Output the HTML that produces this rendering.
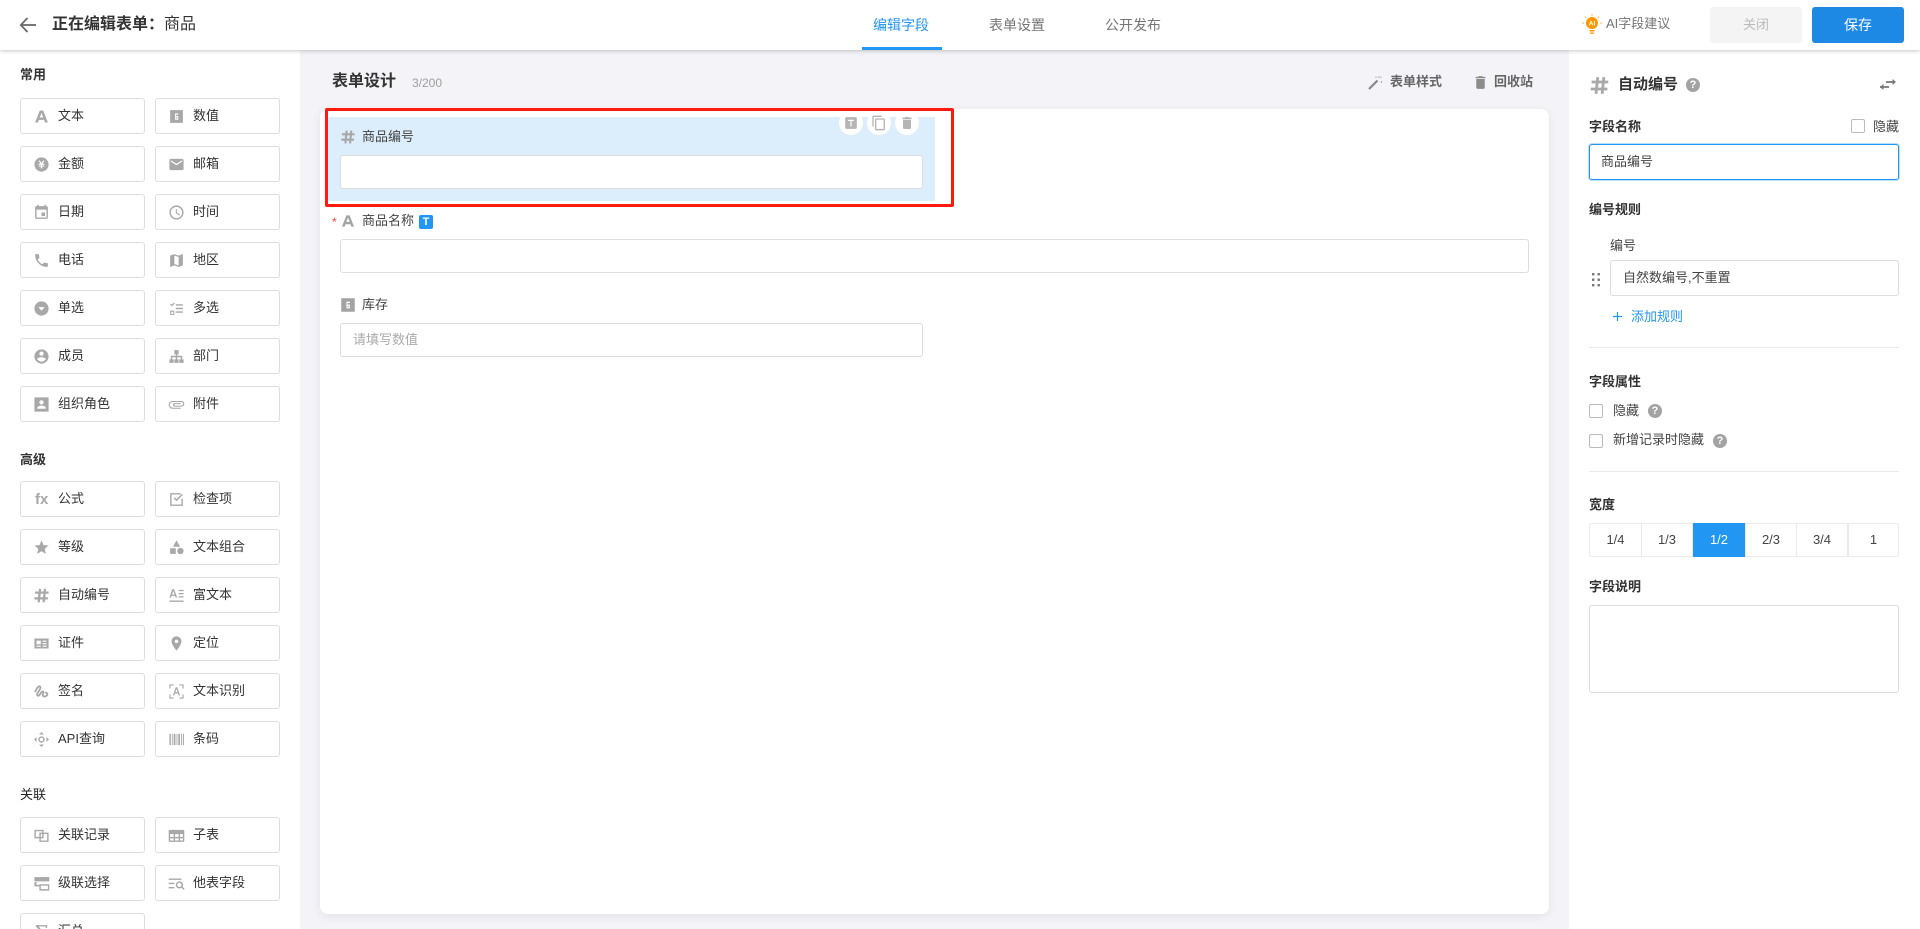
<!DOCTYPE html>
<html lang="zh"><head><meta charset="utf-8"><title>编辑表单</title>
<style>
*{box-sizing:border-box}
html,body{margin:0;padding:0;width:1920px;height:929px;overflow:hidden;background:#f3f3f8;font-family:"Liberation Sans","Noto Sans CJK SC",sans-serif;font-size:13px;color:#333}
.a{position:absolute;white-space:nowrap}
.hd{position:absolute;left:0;top:0;width:1920px;height:50px;background:#fff;box-shadow:0 1px 4px rgba(0,0,0,.22);z-index:5}
.sb{position:absolute;left:0;top:50px;width:300px;height:879px;background:#fff;overflow:hidden}
.rp{position:absolute;left:1569px;top:50px;width:351px;height:879px;background:#fff}
.card{position:absolute;left:320px;top:109px;width:1229px;height:805px;background:#fff;border-radius:8px;box-shadow:0 2px 10px rgba(0,0,0,.07)}
.h{position:absolute;left:20px;font-weight:700;font-size:13px;line-height:20px;color:#333}
.b{position:absolute;width:125px;height:36px;border:1px solid #ddd;border-radius:3px;background:#fff;line-height:33px;padding-left:37px;color:#333;white-space:nowrap}
.b svg{position:absolute;left:12px;top:9px;width:17px;height:17px;fill:#a8a8a8}
.c1{left:20px}.c2{left:155px}
.inp{position:absolute;background:#fff;border:1px solid #ddd;border-radius:3px}
.lb{position:absolute;font-size:13px;line-height:20px;color:#444;white-space:nowrap}
.bl{position:absolute;font-size:13px;font-weight:700;line-height:20px;color:#333;white-space:nowrap}
.cb{position:absolute;width:14px;height:14px;border:1px solid #bbb;border-radius:2px;background:#fff}
.q{position:absolute;width:14px;height:14px;border-radius:50%;background:#a3a3a3;color:#fff;font-size:11px;font-weight:700;line-height:14px;text-align:center}
.dv{position:absolute;left:20px;width:310px;height:1px;background:#eaeaea}
.seg{position:absolute;top:473px;height:34px;line-height:32px;text-align:center;border:1px solid #eaeaea;margin-left:-1px;color:#444;font-size:13px;background:#fff}
svg{display:block}
.ci{position:absolute;width:24px;height:24px;border-radius:50%;background:#fff;top:111px;z-index:2}
.ci svg{position:absolute;left:4px;top:4px;width:16px;height:16px;fill:#b5b5b5}
</style></head><body>
<svg width="0" height="0" style="position:absolute">
<defs>
<symbol id="a" viewBox="0 0 24 24"><path d="M9.600 3.500h4.800L21 20.500h-4l-1.300-3.700H8.300L7 20.500H3zM9.500 13.400h5L12 6.800z"/></symbol>
<symbol id="n" viewBox="0 0 24 24"><path fill-rule="evenodd" d="M3 3h18v18H3zM10 7.500v9h4.500v-5H11.500V9.300h3V7.500zM11.500 13h1.500v2h-1.500z"/></symbol>
<symbol id="m" viewBox="0 0 24 24"><path fill-rule="evenodd" d="M12 2a10 10 0 100 20 10 10 0 000-20zM7.800 6.500h2l2.200 3.600 2.200-3.600h2L13.600 11H16v1.500h-3v1h3V15h-3v2.500h-2V15H8v-1.500h3v-1H8V11h2.400z"/></symbol>
<symbol id="e" viewBox="0 0 24 24"><path d="M20 4H4c-1.100 0-2 .9-2 2v12c0 1.100.9 2 2 2h16c1.100 0 2-.9 2-2V6c0-1.100-.9-2-2-2zm0 4l-8 5-8-5V6l8 5 8-5v2z"/></symbol>
<symbol id="d" viewBox="0 0 24 24"><path d="M17 12h-5v5h5v-5zM16 1v2H8V1H6v2H5c-1.110 0-1.990.9-1.990 2L3 19c0 1.100.89 2 2 2h14c1.100 0 2-.9 2-2V5c0-1.100-.9-2-2-2h-1V1h-2zm3 18H5V8h14v11z"/></symbol>
<symbol id="t" viewBox="0 0 24 24"><path d="M11.990 2C6.470 2 2 6.480 2 12s4.470 10 9.990 10C17.520 22 22 17.520 22 12S17.520 2 11.990 2zM12 20c-4.420 0-8-3.580-8-8s3.580-8 8-8 8 3.580 8 8-3.580 8-8 8zm.5-13H11v6l5.250 3.150.75-1.230-4.500-2.670z"/></symbol>
<symbol id="p" viewBox="0 0 24 24"><path d="M6.620 10.790c1.440 2.830 3.760 5.140 6.590 6.590l2.200-2.200c.27-.27.67-.36 1.020-.24 1.120.37 2.330.57 3.570.57.55 0 1 .45 1 1V20c0 .55-.45 1-1 1-9.390 0-17-7.610-17-17 0-.55.45-1 1-1h3.500c.55 0 1 .45 1 1 0 1.250.2 2.450.57 3.570.11.35.03.74-.25 1.020l-2.200 2.200z"/></symbol>
<symbol id="g" viewBox="0 0 24 24"><path d="M20.500 3l-.16.03L15 5.100 9 3 3.360 4.900c-.21.07-.36.25-.36.48V20.500c0 .28.22.5.5.5l.16-.03L9 18.900l6 2.100 5.640-1.900c.21-.07.36-.25.36-.48V3.500c0-.28-.22-.5-.5-.5zM15 19l-6-2.110V5l6 2.110V19z"/></symbol>
<symbol id="r" viewBox="0 0 24 24"><path fill-rule="evenodd" d="M12 2a10 10 0 100 20 10 10 0 000-20zM7.500 10h9L12 15z"/></symbol>
<symbol id="k" viewBox="0 0 24 24"><path d="M11 6h10v2H11zM11 11h10v2H11zM11 16h10v2H11zM3 15h6v6H3zm1.500 1.500v3h3v-3z"/><path d="M3 6.500l1.200-1.200 1.300 1.300L8.500 3.500 9.700 4.700 5.500 9z"/></symbol>
<symbol id="u" viewBox="0 0 24 24"><path d="M12 2C6.480 2 2 6.480 2 12s4.480 10 10 10 10-4.480 10-10S17.520 2 12 2zm0 3c1.660 0 3 1.340 3 3s-1.340 3-3 3-3-1.340-3-3 1.340-3 3-3zm0 14.200c-2.500 0-4.710-1.280-6-3.220.03-1.990 4-3.080 6-3.080 1.990 0 5.970 1.090 6 3.080-1.290 1.940-3.500 3.220-6 3.220z"/></symbol>
<symbol id="o" viewBox="0 0 24 24"><path d="M9 3h6v6h-2v2h7v5h2v5h-6v-5h2v-3h-5v3h2v5H9v-5h2v-3H6v3h2v5H2v-5h2v-5h7V9H9z"/></symbol>
<symbol id="l" viewBox="0 0 24 24"><path fill-rule="evenodd" d="M2 2h20v20H2zM12 6a3 3 0 100 6 3 3 0 000-6zM6 18h12v-1.500c0-2-4-3-6-3s-6 1-6 3z"/></symbol>
<symbol id="f" viewBox="0 0 24 24"><path d="M1 12.500C1 9.460 3.460 7 6.500 7H19c2.210 0 4 1.790 4 4s-1.790 4-4 4H9.500C8.120 15 7 13.880 7 12.500S8.120 10 9.500 10H18v1.500H9.410c-.55 0-.55 2 0 2H19c1.100 0 2.500-1.400 2.500-2.500S20.100 8.500 19 8.500H6.500C4.570 8.500 2.500 10.570 2.500 12.500S4.570 16.500 6.500 16.500H18V18H6.500C3.460 18 1 15.540 1 12.500z"/></symbol>
<symbol id="c" viewBox="0 0 24 24"><path d="M3 3h15v2H5v14h14v-8h2v10H3z"/><path d="M8 10.500l1.500-1.500 2.500 2.500L19.500 4 21 5.500l-9 9z"/></symbol>
<symbol id="s" viewBox="0 0 24 24"><path d="M12 17.270L18.180 21l-1.640-7.030L22 9.240l-7.190-.61L12 2 9.190 8.630 2 9.240l5.460 4.730L5.820 21z"/></symbol>
<symbol id="j" viewBox="0 0 24 24"><path d="M12 2l5 9H7zM3 13h8v8H3z"/><circle cx="17.500" cy="17" r="4.500"/></symbol>
<symbol id="h" viewBox="0 0 24 24"><path d="M3 8h19M2 16h19M10 2.500L8 21.500M17 2.500l-2 19" fill="none" stroke="#a8a8a8" stroke-width="3.200"/></symbol>
<symbol id="w" viewBox="0 0 24 24"><path d="M6 3h2.500L13 15h-2.200l-.8-2.500H5L4.200 15H2zM5.700 10.700h3.600L7.500 5.500zM15 4h7v1.800h-7zM15 8.500h7v1.800h-7zM15 13h7v1.800h-7zM2 19h20v2H2z"/></symbol>
<symbol id="i" viewBox="0 0 24 24"><path fill-rule="evenodd" d="M2 5h20v14H2zM5 8v5h6V8zM5 15v1.500h6V15zM13.500 8v1.500H19V8zM13.500 11.500V13H19v-1.500zM13.500 15v1.500H19V15z"/></symbol>
<symbol id="v" viewBox="0 0 24 24"><path d="M12 2C8.130 2 5 5.130 5 9c0 5.250 7 13 7 13s7-7.750 7-13c0-3.870-3.130-7-7-7zm0 9.500a2.500 2.500 0 010-5 2.500 2.500 0 010 5z"/></symbol>
<symbol id="x" viewBox="0 0 24 24"><path d="M3 13c1-4 5-10 7-8s-3 8-4 10 1 4 3 2 3-6 5-5-1 4 0 6 5 1 6-1-1-4-3-3" fill="none" stroke="#a8a8a8" stroke-width="2.600"/></symbol>
<symbol id="y" viewBox="0 0 24 24"><path d="M2 8V2h6v1.600H3.600V8zM16 2h6v6h-1.600V3.600H16zM2 16h1.600v4.400H8V22H2zM20.400 16H22v6h-6v-1.600h4.400zM11 6h2l4 11.500h-2l-.9-2.700H9.900L9 17.500H7zM10.500 13h3L12 8.500z"/></symbol>
<symbol id="z" viewBox="0 0 24 24"><path d="M12 1.500l3.500 3.500h-7zM12 22.500l-3.500-3.500h7zM1.500 12L5 8.500v7zM22.500 12L19 15.500v-7z"/><path fill-rule="evenodd" d="M12 7.500a4.500 4.500 0 100 9 4.500 4.500 0 000-9zm0 2a2.500 2.500 0 110 5 2.500 2.500 0 010-5z"/></symbol>
<symbol id="q" viewBox="0 0 24 24"><path d="M2 4h2v16H2zM5.500 4h1.200v16H5.500zM8 4h2.500v16H8zM12 4h1.200v16H12zM14.500 4H17v16h-2.500zM18.500 4h1.200v16h-1.200zM21 4h1.500v16H21z"/></symbol>
<symbol id="lk" viewBox="0 0 24 24"><path fill-rule="evenodd" d="M2 4h13v4h7v13H9v-5H2zM4 6v8h5V8h4V6zM11 10v9h9v-9h-5v6h-4v-2h2v-4z"/></symbol>
<symbol id="tb" viewBox="0 0 24 24"><path fill-rule="evenodd" d="M3 4h18q2 0 2 2v13q0 2-2 2H3q-2 0-2-2V6q0-2 2-2zM3 10v4h5v-4zM10 10v4h5v-4zM17 10v4h4v-4zM3 16v3h5v-3zM10 16v3h5v-3zM17 16v3h4v-3z"/></symbol>
<symbol id="cs" viewBox="0 0 24 24"><path d="M2 3h21v6H2zM2 10h3v4h4v-1h14v9H9v-6H2zM11 15v5h10v-5z"/></symbol>
<symbol id="lu" viewBox="0 0 24 24"><path d="M1 5h18v1.800H1zM1 11h8v1.800H1zM1 17h8v1.800H1z"/><path fill-rule="evenodd" d="M16 9a5 5 0 103 9l3 3 1.500-1.500-3-3A5 5 0 0016 9zm0 2a3 3 0 110 6 3 3 0 010-6z"/></symbol>
<symbol id="su" viewBox="0 0 24 24"><path d="M4 3h16v4h-2V5H8l6 7-6 7h10v-2h2v4H4v-2l7-7-7-7z"/></symbol>
<symbol id="tr" viewBox="0 0 24 24"><path d="M6 19c0 1.100.9 2 2 2h8c1.100 0 2-.9 2-2V7H6v12zM19 4h-3.500l-1-1h-5l-1 1H5v2h14V4z"/></symbol>
</defs></svg>

<div class="hd">
<svg class="a" style="left:19px;top:16px;width:18px;height:18px" viewBox="0 0 18 18"><path d="M17 9H2M8.500 2L1.800 9l6.700 7" fill="none" stroke="#666" stroke-width="1.700"/></svg>
<div class="a" style="left:52px;top:13px;font-size:16px;font-weight:700;line-height:24px;color:#333">正在编辑表单：</div>
<div class="a" style="left:164px;top:13px;font-size:16px;line-height:24px;color:#333">商品</div>
<div class="a" style="left:873px;top:15px;font-size:14px;line-height:20px;color:#2196f3">编辑字段</div>
<div class="a" style="left:862px;top:47px;width:80px;height:3px;background:#2196f3"></div>
<div class="a" style="left:989px;top:15px;font-size:14px;line-height:20px;color:#757575">表单设置</div>
<div class="a" style="left:1105px;top:15px;font-size:14px;line-height:20px;color:#757575">公开发布</div>
<svg class="a" style="left:1582px;top:13px;width:20px;height:22px" viewBox="0 0 20 22"><circle cx="10" cy="10" r="6" fill="#ff9800"/><rect x="7.500" y="17" width="5" height="1.500" fill="#ff9800"/><rect x="8" y="19.500" width="4" height="1.300" fill="#ff9800"/><path d="M10 1v2M3 3.500l1.500 1.500M17 3.500L15.500 5M0 10h2M18 10h2" stroke="#f7b864" stroke-width="1"/><text x="10" y="12.500" font-size="6.500" font-weight="700" fill="#fff" text-anchor="middle" font-family="Liberation Sans">AI</text></svg>
<div class="a" style="left:1606px;top:14px;font-size:13px;line-height:20px;color:#757575">AI字段建议</div>
<div class="a" style="left:1710px;top:7px;width:92px;height:36px;background:#f4f4f4;border-radius:3px;text-align:center;line-height:36px;color:#bbb;font-size:13px">关闭</div>
<div class="a" style="left:1812px;top:7px;width:92px;height:36px;background:#1e88e5;border-radius:3px;text-align:center;line-height:36px;color:#fff;font-size:14px">保存</div>
</div>

<div class="sb" style="top:0;height:929px">
<div class="h" style="top:65px">常用</div>
<div class="b c1" style="top:98px"><svg><use href="#a"/></svg>文本</div>
<div class="b c2" style="top:98px"><svg><use href="#n"/></svg>数值</div>
<div class="b c1" style="top:146px"><svg><use href="#m"/></svg>金额</div>
<div class="b c2" style="top:146px"><svg><use href="#e"/></svg>邮箱</div>
<div class="b c1" style="top:194px"><svg><use href="#d"/></svg>日期</div>
<div class="b c2" style="top:194px"><svg><use href="#t"/></svg>时间</div>
<div class="b c1" style="top:242px"><svg><use href="#p"/></svg>电话</div>
<div class="b c2" style="top:242px"><svg><use href="#g"/></svg>地区</div>
<div class="b c1" style="top:290px"><svg><use href="#r"/></svg>单选</div>
<div class="b c2" style="top:290px"><svg><use href="#k"/></svg>多选</div>
<div class="b c1" style="top:338px"><svg><use href="#u"/></svg>成员</div>
<div class="b c2" style="top:338px"><svg><use href="#o"/></svg>部门</div>
<div class="b c1" style="top:386px"><svg><use href="#l"/></svg>组织角色</div>
<div class="b c2" style="top:386px"><svg><use href="#f"/></svg>附件</div>
<div class="h" style="top:450px">高级</div>
<div class="b c1" style="top:481px"><span class="a" style="left:14px;top:1px;font-size:15px;font-weight:700;color:#a8a8a8;line-height:33px">fx</span>公式</div>
<div class="b c2" style="top:481px"><svg><use href="#c"/></svg>检查项</div>
<div class="b c1" style="top:529px"><svg><use href="#s"/></svg>等级</div>
<div class="b c2" style="top:529px"><svg><use href="#j"/></svg>文本组合</div>
<div class="b c1" style="top:577px"><svg><use href="#h"/></svg>自动编号</div>
<div class="b c2" style="top:577px"><svg><use href="#w"/></svg>富文本</div>
<div class="b c1" style="top:625px"><svg><use href="#i"/></svg>证件</div>
<div class="b c2" style="top:625px"><svg><use href="#v"/></svg>定位</div>
<div class="b c1" style="top:673px"><svg><use href="#x"/></svg>签名</div>
<div class="b c2" style="top:673px"><svg><use href="#y"/></svg>文本识别</div>
<div class="b c1" style="top:721px"><svg><use href="#z"/></svg>API查询</div>
<div class="b c2" style="top:721px"><svg><use href="#q"/></svg>条码</div>
<div class="h" style="top:785px;font-weight:400;color:#222">关联</div>
<div class="b c1" style="top:817px"><svg><use href="#lk"/></svg>关联记录</div>
<div class="b c2" style="top:817px"><svg><use href="#tb"/></svg>子表</div>
<div class="b c1" style="top:865px"><svg><use href="#cs"/></svg>级联选择</div>
<div class="b c2" style="top:865px"><svg><use href="#lu"/></svg>他表字段</div>
<div class="b c1" style="top:913px"><svg><use href="#su"/></svg>汇总</div>
</div>

<div class="a" style="left:332px;top:70px;font-size:16px;font-weight:700;line-height:24px;color:#333">表单设计</div>
<div class="a" style="left:412px;top:74px;font-size:12px;line-height:18px;color:#9e9e9e">3/200</div>
<svg class="a" style="left:1368px;top:75px;width:15px;height:15px" viewBox="0 0 15 15"><path d="M1 14L9.500 5.500" stroke="#888" stroke-width="2.200"/><path d="M11 1v2M13.500 6v2M8 1.500v1.500M12.500 3l1-1" stroke="#aaa" stroke-width="1"/></svg>
<div class="a" style="left:1390px;top:72px;font-size:13px;font-weight:700;line-height:20px;color:#666">表单样式</div>
<svg class="a" style="left:1472px;top:74px;width:17px;height:17px;fill:#8c8c8c"><use href="#tr"/></svg>
<div class="a" style="left:1494px;top:72px;font-size:13px;font-weight:700;line-height:20px;color:#666">回收站</div>

<div class="card"></div>
<div class="a" style="left:328px;top:117px;width:607px;height:84px;background:#dcedfc"></div>
<svg class="a" style="left:340px;top:129px;width:16px;height:16px"><use href="#h"/></svg>
<div class="lb" style="left:362px;top:127px">商品编号</div>
<div class="inp" style="left:340px;top:155px;width:583px;height:34px"></div>
<div class="a" style="left:325px;top:108px;width:629px;height:99px;border:3px solid #ff1a10;border-radius:2px;z-index:1"></div>
<div class="ci" style="left:839px"><svg style="left:5px;top:5px;width:14px;height:14px" viewBox="0 0 24 24"><path fill-rule="evenodd" d="M4 2h16q2 0 2 2v16q0 2-2 2H4q-2 0-2-2V4q0-2 2-2zM7 6.500v2h4V18h2V8.500h4v-2z"/></svg></div>
<div class="ci" style="left:867px"><svg viewBox="0 0 24 24"><path d="M16 1H4c-1.100 0-2 .9-2 2v14h2V3h12V1zm3 4H8c-1.100 0-2 .9-2 2v14c0 1.100.9 2 2 2h11c1.100 0 2-.9 2-2V7c0-1.100-.9-2-2-2zm0 16H8V7h11v14z"/></svg></div>
<div class="ci" style="left:895px"><svg><use href="#tr"/></svg></div>

<div class="a" style="left:332px;top:214px;color:#f44336;font-size:12px;line-height:16px">*</div>
<svg class="a" style="left:340px;top:213px;width:16px;height:16px;fill:#a3a3a3"><use href="#a"/></svg>
<div class="lb" style="left:362px;top:211px">商品名称</div>
<div class="a" style="left:419px;top:215px;width:14px;height:14px;background:#2196f3;border-radius:2px;color:#fff;font-size:11px;font-weight:700;text-align:center;line-height:14px">T</div>
<div class="inp" style="left:340px;top:239px;width:1189px;height:34px"></div>
<svg class="a" style="left:339px;top:296px;width:18px;height:18px;fill:#a3a3a3"><use href="#n"/></svg>
<div class="lb" style="left:362px;top:295px">库存</div>
<div class="inp" style="left:340px;top:323px;width:583px;height:34px;padding-left:12px;line-height:32px;color:#aaa">请填写数值</div>

<div class="rp">
<svg class="a" style="left:20px;top:25px;width:21px;height:21px;fill:#888"><use href="#h"/></svg>
<div class="a" style="left:49px;top:25px;font-size:15px;font-weight:700;line-height:20px;color:#333">自动编号</div>
<div class="q" style="left:117px;top:28px">?</div>
<svg class="a" style="left:310px;top:27px;width:18px;height:16px" viewBox="0 0 18 16"><path d="M7 5h9M1 10h9" fill="none" stroke="#777" stroke-width="1.800"/><path d="M13.500 2l3.500 3-3.500 3zM4.500 7L1 10l3.500 3z" fill="#777"/></svg>
<div class="bl" style="left:20px;top:67px">字段名称</div>
<div class="cb" style="left:282px;top:69px"></div>
<div class="lb" style="left:304px;top:67px">隐藏</div>
<div class="inp" style="left:20px;top:94px;width:310px;height:36px;border-color:#2196f3;box-shadow:0 0 0 1px #bbdefb;padding-left:11px;line-height:33px;color:#444">商品编号</div>
<div class="bl" style="left:20px;top:150px">编号规则</div>
<div class="lb" style="left:41px;top:186px">编号</div>
<svg class="a" style="left:22px;top:222px;width:10px;height:16px" viewBox="0 0 10 16" fill="#777"><rect x="1" y="1" width="2.400" height="2.400"/><rect x="6.500" y="1" width="2.400" height="2.400"/><rect x="1" y="6.500" width="2.400" height="2.400"/><rect x="6.500" y="6.500" width="2.400" height="2.400"/><rect x="1" y="12" width="2.400" height="2.400"/><rect x="6.500" y="12" width="2.400" height="2.400"/></svg>
<div class="inp" style="left:41px;top:210px;width:289px;height:36px;padding-left:12px;line-height:33px;color:#444">自然数编号,不重置</div>
<svg class="a" style="left:43px;top:261px;width:11px;height:11px" viewBox="0 0 11 11"><path d="M5.500 1v9M1 5.500h9" stroke="#2196f3" stroke-width="1.200"/></svg>
<div class="a" style="left:62px;top:257px;font-size:13px;line-height:20px;color:#2196f3">添加规则</div>
<div class="dv" style="top:297px"></div>
<div class="bl" style="left:20px;top:322px">字段属性</div>
<div class="cb" style="left:20px;top:354px"></div>
<div class="lb" style="left:44px;top:351px">隐藏</div>
<div class="q" style="left:79px;top:354px">?</div>
<div class="cb" style="left:20px;top:384px"></div>
<div class="lb" style="left:44px;top:380px">新增记录时隐藏</div>
<div class="q" style="left:144px;top:384px">?</div>
<div class="dv" style="top:421px"></div>
<div class="bl" style="left:20px;top:445px">宽度</div>
<div class="seg" style="left:21px;width:53px;border-radius:3px 0 0 3px">1/4</div>
<div class="seg" style="left:73px;width:52px">1/3</div>
<div class="seg" style="left:125px;width:52px;background:#2196f3;border-color:#2196f3;color:#fff">1/2</div>
<div class="seg" style="left:177px;width:52px">2/3</div>
<div class="seg" style="left:228px;width:52px">3/4</div>
<div class="seg" style="left:280px;width:51px;border-radius:0 3px 3px 0">1</div>
<div class="bl" style="left:20px;top:527px">字段说明</div>
<div class="inp" style="left:20px;top:555px;width:310px;height:88px"></div>
</div>
</body></html>
